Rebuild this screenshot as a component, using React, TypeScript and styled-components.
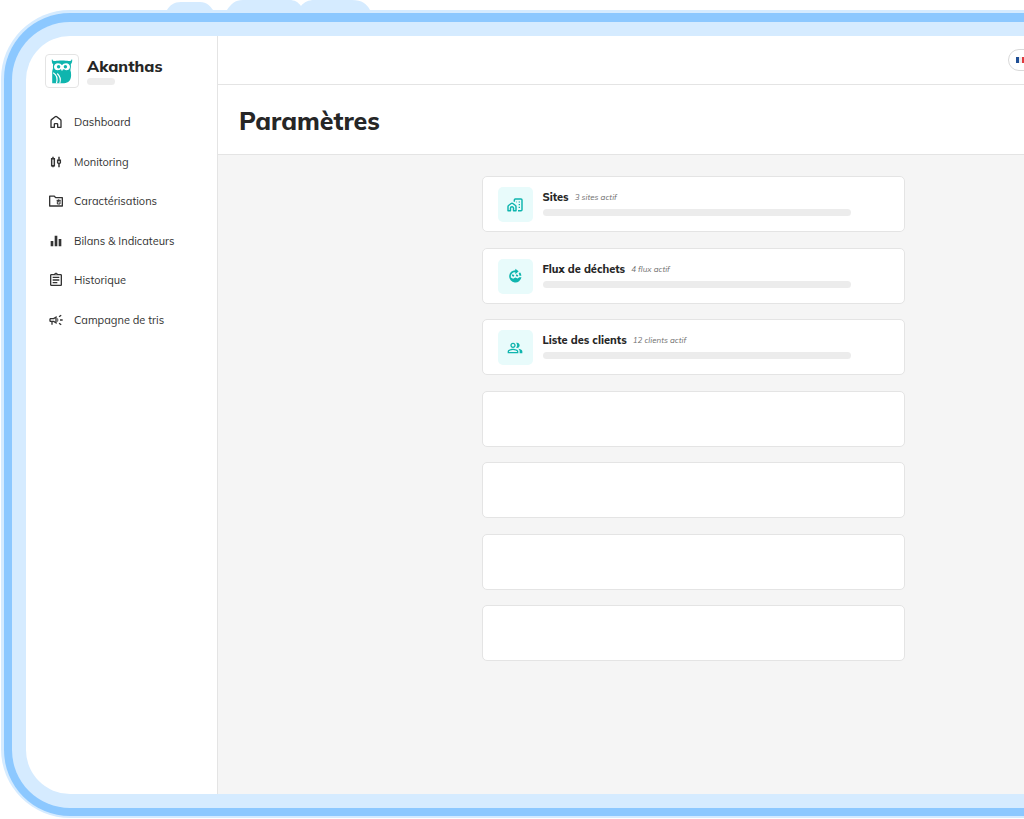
import React from "react";
import styled, { createGlobalStyle } from "styled-components";
import {
  MdOutlineAssignment,
  MdOutlineCampaign,
  MdOutlineEqualizer,
  MdOutlinePeopleAlt,
} from "react-icons/md";

const sky = "#d5ebff";
const blue = "#8cc8ff";
const line = "#e4e4e4";
const teal = "#0fb5ae";

const GlobalStyle = createGlobalStyle`
  * { box-sizing: border-box; }
  body {
    margin: 0;
    background: #fff;
    color: #262626;
    font-family: Mulish, Inter, "Open Sans", sans-serif;
    overflow: hidden;
  }
`;

const Page = styled.div`
  display: flex;
  flex-direction: column;
  min-height: 100vh;
  padding: 0 0 1px 1px;
  overflow: hidden;
`;

const Clouds = styled.svg`
  display: block;
  flex: none;
  width: 210px;
  height: 10px;
  margin-left: 165px;
`;

/* The device runs past the right edge of the window. */
const Halo = styled.div`
  display: flex;
  flex: 1;
  width: calc(100% + 144px);
  padding: 3px 0 2px 3px;
  border-radius: 69px 0 0 69px;
  background: ${sky};
`;

const Bezel = styled.div`
  display: flex;
  flex: 1;
  padding: 9px 0 8px 8px;
  border-radius: 66px 0 0 66px;
  background: ${blue};
`;

const Rim = styled.div`
  display: flex;
  flex: 1;
  padding: 14px 0 14px 14px;
  border-radius: 58px 0 0 58px;
  background: ${sky};
`;

const Screen = styled.div`
  display: flex;
  flex: 1;
  border-radius: 44px 0 0 44px;
  background: #fff;
  overflow: hidden;
`;

const Sidebar = styled.aside`
  flex: none;
  width: 192px;
  padding: 18px 0 0 19px;
  border-right: 1px solid ${line};
`;

const Brand = styled.div`
  display: flex;
  gap: 8px;
`;

const LogoBox = styled.div`
  display: grid;
  place-items: center;
  width: 34px;
  height: 34px;
  border: 1px solid ${line};
  border-radius: 4px;
`;

const BrandText = styled.div`
  display: flex;
  flex-direction: column;
  gap: 2px;
  padding-top: 2px;
`;

const BrandName = styled.span`
  font-size: 16px;
  line-height: 20px;
  font-weight: 800;
`;

const Placeholder = styled.div<{ $w: string }>`
  width: ${(p) => p.$w};
  height: 7px;
  border-radius: 4px;
  background: #ececec;
`;

const Nav = styled.nav`
  display: flex;
  flex-direction: column;
  justify-content: space-between;
  height: 242px;
  padding-top: 24px;
`;

const NavLink = styled.a`
  display: flex;
  align-items: center;
  gap: 10px;
  padding-left: 3px;
  color: #333;
  font-size: 11px;
  line-height: 20px;
  text-decoration: none;

  svg {
    width: 16px;
    height: 16px;
    flex: none;
  }
`;

const Main = styled.main`
  display: flex;
  flex: 1;
  flex-direction: column;
  background: #f5f5f5;
`;

const TopBar = styled.div`
  display: flex;
  align-items: center;
  justify-content: flex-end;
  height: 49px;
  padding-right: 100px;
  border-bottom: 1px solid ${line};
  background: #fff;
`;

const LanguageButton = styled.button`
  display: flex;
  align-items: center;
  width: 60px;
  height: 22px;
  padding: 0 0 0 7px;
  border: 1px solid #d9d9d9;
  border-radius: 11px;
  background: #fff;
`;

const Heading = styled.header`
  height: 70px;
  padding: 19px 21px;
  border-bottom: 1px solid ${line};
  background: #fff;

  h1 {
    margin: 0;
    font-size: 25px;
    line-height: 34px;
    font-weight: 800;
  }
`;

const CardList = styled.ul`
  display: flex;
  flex-direction: column;
  justify-content: space-between;
  width: 423px;
  height: 485px;
  margin: 21px auto;
  padding: 0;
  list-style: none;
`;

const Card = styled.li`
  display: flex;
  gap: 10px;
  height: 56px;
  padding: 10px 15px;
  border: 1px solid ${line};
  border-radius: 5px;
  background: #fff;
`;

const Tile = styled.div`
  display: grid;
  place-items: center;
  flex: none;
  width: 35px;
  height: 35px;
  border-radius: 5px;
  background: #e8fbfb;
  color: ${teal};

  svg {
    width: 16px;
    height: 16px;
  }
`;

const CardBody = styled.div`
  display: flex;
  flex: 1;
  flex-direction: column;
  gap: 4px;
  padding: 3px 38px 0 0;
`;

const CardTitle = styled.div`
  display: flex;
  align-items: center;
  gap: 6px;
  line-height: 15px;

  h2 {
    margin: 0;
    font-size: 11px;
    font-weight: 800;
  }

  em {
    color: #6f6f6f;
    font-size: 8px;
  }
`;

const Owl = () => (
  <svg width="24" height="26" viewBox="0 0 24 26" aria-hidden="true">
    <path
      fill={teal}
      d="M2 .8c.5 2 1.600 2.500 3.500 2.200C8 2.300 16 2.300 18.500 3c1.900.3 3-.2 3.500-2.200.6 2.500 0 4.300-1.200 5.400.5 3-.4 4.300-.4 6.400.7 1.500.7 3 .7 5 0 4.500-2.700 7.600-7 7.600H2.200V14c0-1.800.8-2.400.8-4.200 0-1.200-.2-2.200.2-3.200C2 5.500 1.400 3.300 2 .8z"
    />
    <path
      fill="#fff"
      d="M4 9c0-2.300 1.700-3.700 3.900-3.700 2 0 3.300.9 4.100 2 .8-1.100 2.100-2 4.100-2 2.200 0 3.900 1.400 3.900 3.700 0 2-1.700 3.300-3.700 3.300-1.500 0-2.500-.4-3.200-1.200L12 13.300l-1.100-2.200c-.7.800-1.700 1.200-3.200 1.200C5.700 12.300 4 11 4 9z"
    />
    <circle cx="8.600" cy="8.700" r="1.700" fill={teal} />
    <circle cx="15.400" cy="8.700" r="1.700" fill={teal} />
    <path
      d="M3.200 14.800c3.600 2 4.600 5.800 3.300 10.600M7.200 15.500c3.200 2.800 3.800 6 2.600 9.900"
      fill="none"
      stroke="#fff"
      strokeWidth="1.200"
    />
  </svg>
);

const HomeIcon = () => (
  <svg viewBox="0 0 24 24" fill="none" stroke="currentColor" strokeWidth="2">
    <path
      d="M4.500 20V10q0-1 .8-1.600L10.800 4.200q1.200-.9 2.400 0l5.500 4.200q.8.600.8 1.600V20H14.500v-4.500q0-1-1-1h-3q-1 0-1 1V20z"
      strokeLinejoin="round"
    />
  </svg>
);

const MonitoringIcon = () => (
  <svg viewBox="0 0 24 24" fill="none" stroke="currentColor" strokeWidth="2.200">
    <path d="M5.500 7h4v10.500h-4zM7.500 4v3M7.500 17.500V20M16.500 4v5M16.500 15v5M14.500 9.500h4V13l-2 2-2-2z" />
  </svg>
);

const FolderIcon = () => (
  <svg viewBox="0 0 24 24" fill="none" stroke="currentColor" strokeWidth="2">
    <path d="M2.500 4.800H9.500l2 2.200h10v12.500h-19z" strokeLinejoin="round" />
    <path d="M13 11h6M14 11v5.500h4V11M16 9.500V14" strokeWidth="1.500" />
  </svg>
);

const SitesIcon = () => (
  <svg viewBox="0 0 24 24" fill="none" stroke="currentColor" strokeWidth="2.200">
    <path
      d="M1.500 20.500v-6q0-1 .8-1.700l4-3q1.200-.9 2.400 0l4 3q.8.700.8 1.700v6H9.800V17a2.300 2.300 0 0 0-4.600 0v3.500z"
      strokeLinejoin="round"
    />
    <path d="M11 7V4.500Q11 3 12.500 3h8.500q1.500 0 1.500 1.500v14.500q0 1.500-1.500 1.500H16.500" />
    <path d="M17.500 7.500h2M17.500 11.500h2M17.500 15.500h2M14 7.500h1" strokeWidth="1.800" />
  </svg>
);

const WasteIcon = () => (
  <svg viewBox="0 0 24 24" fill="currentColor">
    <path d="M12.500 1v2.200A9.300 9.300 0 1 0 21.700 14h-3.400l-2.300 1.800-3.500-1.500-3.300 2-3.400-2A6.300 6.300 0 0 1 12.500 6.500V9.200L17.500 5z" />
    <path d="M17.500 8.200 19.500 6.500A9.500 9.500 0 0 1 21.600 11.500h-3A6.500 6.500 0 0 0 17.500 8.200z" />
    <path d="M8 9.500l3 1-.8 2.500-3-1zM14 9.500l3 1.200-1.200 2.600-2.600-1.200z" />
  </svg>
);

const Flag = () => (
  <svg width="11" height="6" viewBox="0 0 11 6" aria-hidden="true">
    <path fill="#1f4f96" d="M0 0h3v6H0z" />
    <path fill="#eee" d="M3 0h3v6H3z" />
    <path fill="#e0393e" d="M6 0h5v6H6z" />
  </svg>
);

const navItems = [
  { label: "Dashboard", icon: <HomeIcon /> },
  { label: "Monitoring", icon: <MonitoringIcon /> },
  { label: "Caractérisations", icon: <FolderIcon /> },
  { label: "Bilans & Indicateurs", icon: <MdOutlineEqualizer /> },
  { label: "Historique", icon: <MdOutlineAssignment /> },
  { label: "Campagne de tris", icon: <MdOutlineCampaign /> },
];

const settings = [
  { title: "Sites", note: "3 sites actif", icon: <SitesIcon /> },
  { title: "Flux de déchets", note: "4 flux actif", icon: <WasteIcon /> },
  { title: "Liste des clients", note: "12 clients actif", icon: <MdOutlinePeopleAlt /> },
];

const emptyCards = [1, 2, 3, 4];

export default function App() {
  return (
    <Page>
      <GlobalStyle />
      <Clouds viewBox="0 0 210 10" aria-hidden="true">
        <path
          fill={sky}
          d="M1 10C4 5 8 2 15 2h19c7 0 10 4 13 8zM61 10C65 4 69 0 77 0h46c6 0 9 2 12 6 3-4 8-6 13-6h38c10 0 15 4 18 10z"
        />
      </Clouds>
      <Halo>
        <Bezel>
          <Rim>
            <Screen>
              <Sidebar>
                <Brand>
                  <LogoBox>
                    <Owl />
                  </LogoBox>
                  <BrandText>
                    <BrandName>Akanthas</BrandName>
                    <Placeholder $w="28px" />
                  </BrandText>
                </Brand>
                <Nav>
                  {navItems.map((item) => (
                    <NavLink href="#" key={item.label}>
                      {item.icon}
                      {item.label}
                    </NavLink>
                  ))}
                </Nav>
              </Sidebar>
              <Main>
                <TopBar>
                  <LanguageButton type="button" aria-label="Français">
                    <Flag />
                  </LanguageButton>
                </TopBar>
                <Heading>
                  <h1>Paramètres</h1>
                </Heading>
                <CardList>
                  {settings.map((item) => (
                    <Card key={item.title}>
                      <Tile>{item.icon}</Tile>
                      <CardBody>
                        <CardTitle>
                          <h2>{item.title}</h2>
                          <em>{item.note}</em>
                        </CardTitle>
                        <Placeholder $w="100%" />
                      </CardBody>
                    </Card>
                  ))}
                  {emptyCards.map((n) => (
                    <Card key={n} />
                  ))}
                </CardList>
              </Main>
            </Screen>
          </Rim>
        </Bezel>
      </Halo>
    </Page>
  );
}
